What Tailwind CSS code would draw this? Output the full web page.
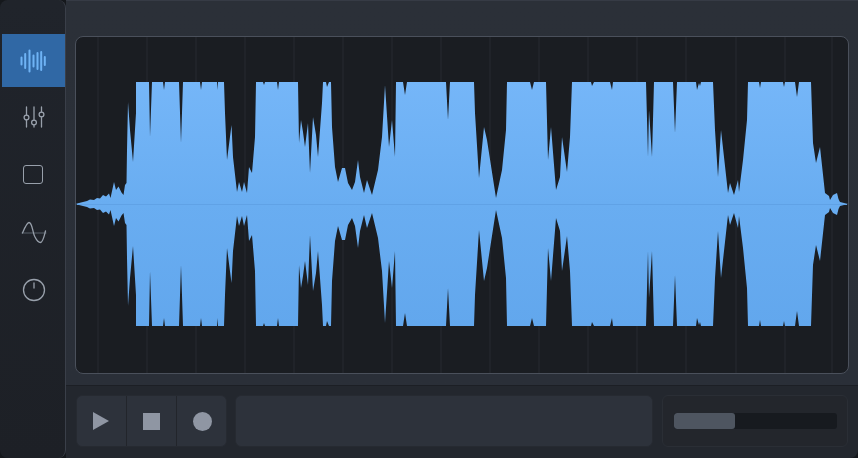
<!DOCTYPE html>
<html lang="en">
<head>
    <meta charset="UTF-8">
    <title>Waveform Editor</title>
    <script src="https://cdn.jsdelivr.net/npm/@tailwindcss/browser@4"></script>
</head>
<body class="w-[858px] h-[458px] overflow-hidden bg-[#15181c] flex">
    <!-- sidebar -->
    <aside class="relative z-10 w-[66px] h-full shrink-0 bg-gradient-to-b from-[#20242b] to-[#1d2026] border-r border-[#3a3f49] rounded-lg pt-[34px] pl-[2px] flex flex-col items-stretch text-[#98a0ab]">
        <div class="h-[53px] bg-[#3068a5] flex items-center justify-center">
            <svg width="28" height="24" viewBox="0 0 28 24" fill="none" stroke="#6fb3f5" stroke-width="2" stroke-linecap="round">
                <path d="M1.5 8.5v7M5.2 5v14M9.5 1.5v21M13.5 6.500v11M17.500 4v16M21.200 3v18M24.800 8v8"/>
            </svg>
        </div>
        <div class="h-[60px] flex items-center justify-center">
            <svg width="26" height="24" viewBox="0 0 26 24" fill="none" stroke="currentColor" stroke-width="1.3" stroke-linecap="round">
                <path d="M5.500 2v8M5.500 15v7M13 2v13M13 20v2M20.500 2v5M20.500 12v10"/>
                <circle cx="5.500" cy="12.500" r="2.400"/><circle cx="13" cy="17.500" r="2.400"/><circle cx="20.500" cy="9.500" r="2.400"/>
            </svg>
        </div>
        <div class="h-[55px] flex items-center justify-center">
            <div class="w-[20px] h-[19px] mr-px rounded-[3px] border-[1.5px] border-[#98a0ab]"></div>
        </div>
        <div class="h-[60px] flex items-center justify-center">
            <svg width="26" height="24" viewBox="0 0 26 24" fill="none" stroke="currentColor" stroke-width="1.3" stroke-linecap="round">
                <path d="M1 13H25" stroke="#59606b" stroke-width="1"/>
                <path d="M1.500 13C4 7 6 2.500 8 2.500C11.500 2.500 11.500 13 14 17C15.500 20 17.500 22.500 19.500 22.500C22 22.500 23.500 15 24.500 11"/>
            </svg>
        </div>
        <div class="h-[56px] flex items-center justify-center">
            <svg width="24" height="24" viewBox="0 0 24 24" fill="none" stroke="currentColor" stroke-width="1.3" stroke-linecap="round">
                <circle cx="12" cy="12" r="10.500"/><path d="M12 5v5"/>
            </svg>
        </div>
    </aside>

    <main class="-ml-2 pl-2 flex-1 flex flex-col min-w-0">
        <!-- waveform area -->
        <section class="h-[386px] shrink-0 bg-gradient-to-b from-[#2b3038] to-[#2a2f38] border-b border-[#1c1f25] pt-[35px] pl-[9px] pr-[9px] border-t border-t-[#363b45]">
            <div class="w-[774px] h-[338px] rounded-lg overflow-hidden border border-[#4a505b] bg-[#1a1d22]">
                <svg class="block w-full h-full" viewBox="76 37 772 336" preserveAspectRatio="none">
                    <defs>
                        <linearGradient id="waveTop" gradientUnits="userSpaceOnUse" x1="0" y1="82" x2="0" y2="204">
                            <stop offset="0" stop-color="#75b6f8"/>
                            <stop offset="1" stop-color="#69adf1"/>
                        </linearGradient>
                        <linearGradient id="waveBottom" gradientUnits="userSpaceOnUse" x1="0" y1="204" x2="0" y2="82">
                            <stop offset="0" stop-color="#69adf1"/>
                            <stop offset="1" stop-color="#62a7ed"/>
                        </linearGradient>
                        <path id="half" d="M76 204L77 203.500L83 202L87 201L90 199.500L94 200L97 198L100 198.500L103 195L106 196.500L109 193.500L110.500 198L114 182L116 190L118.500 186.500L121.500 192.500L123.500 195L125 185L126.500 183L127 150L128 102L130 130L133 162L136 113L136 82L149 82L150 137L152 82L163 82L164 90L165 82L179 82L181 143L183 82L200 82L201 90L202 82L217 82L217.500 90L218 82L224 82L225 113L227 160L231.500 125L233 157L237 192L239 182L242 192L244 182L247 193L249 167L252 173L255 137L256 82L263 82L264 85L265 82L277 82L278 90L279 82L298 82L299 143L301 120L303 132L305 147L308 123L310 173L313 117L316 135L318 157L322 103L323 82L326 82L327 87L329 82L331 82L332 127L335 167L338 182L342 168L345 168L348 183L352 190L355 182L358 160L360 177L364 193L367 180L372 195L378 170L382 137L385 85L389 147L392 120L395 157L396 82L403 82L405 95L407 82L446 82L448 120L450 82L474 82L475 113L479 178L484 127L487 140L496 198L502 170L506 130L507 82L530 82L532 90L534 82L546 82L548 160L551 127L556 190L560 177L562 137L567 172L570 137L572 82L591 82L592 86L594 82L610 82L612 90L613 82L646 82L648 157L649 110L652 157L654 82L673 82L675 133L677 82L696 82L697 90L699 83L700 86L701 82L713 82L715 130L718 177L721 130L728 193L730 183L734 195L738 180L739 192L743 160L747 120L748 82L759 82L760 88L761 82L783 82L784 87L785 82L795 82L797 97L799 82L811 82L813 143L816 163L820 147L825 193L829 196L830 200L833 195L837 193L838.500 199L840 202L848 204Z"/>
                    </defs>
                    <path stroke="#262a30" stroke-width="1" d="M98 37V373M147 37V373M196 37V373M245 37V373M294 37V373M343 37V373M392 37V373M441 37V373M490 37V373M539 37V373M588 37V373M637 37V373M686 37V373M736 37V373M785 37V373M832 37V373"/>
                    <use href="#half" fill="url(#waveTop)"/>
                    <use href="#half" fill="url(#waveBottom)" transform="matrix(1 0 0 -1 0 408)"/>
                    <path d="M77 204.500H847" stroke="#60a2e6" stroke-width="1"/>
                </svg>
            </div>
        </section>

        <!-- transport bar -->
        <footer class="flex-1 bg-[#23272e] pl-[10px] pr-[10px] pt-[9px] flex gap-[8px] items-start rounded-br-lg">
            <div class="w-[151px] h-[52px] flex rounded-md bg-[#2d323b] border border-[#262a31]">
                <div class="w-[50px] flex items-center justify-center border-r border-[#22252b]">
                    <svg class="mr-[2px]" width="18" height="20" viewBox="0 0 18 20"><path d="M1 1L17 10L1 19Z" fill="#8f96a3"/></svg>
                </div>
                <div class="w-[50px] flex items-center justify-center border-r border-[#22252b]">
                    <div class="w-[17px] h-[17px] bg-[#8f96a3]"></div>
                </div>
                <div class="flex-1 flex items-center justify-center">
                    <div class="w-[19px] h-[19px] ml-[3px] rounded-full bg-[#8f96a3]"></div>
                </div>
            </div>
            <div class="w-[419px] h-[52px] rounded-md bg-[#2d323b] border border-[#262a31]"></div>
            <div class="w-[186px] h-[52px] ml-px rounded-md bg-[#23262c] border border-[#2a2e35] flex items-center pl-[11px] pr-[10px]">
                <div class="w-full h-[16px] rounded-[3px] bg-[#171a1f] overflow-hidden">
                    <div class="w-[61px] h-full rounded-[3px] bg-[#4e5560]"></div>
                </div>
            </div>
        </footer>
    </main>
</body>
</html>
